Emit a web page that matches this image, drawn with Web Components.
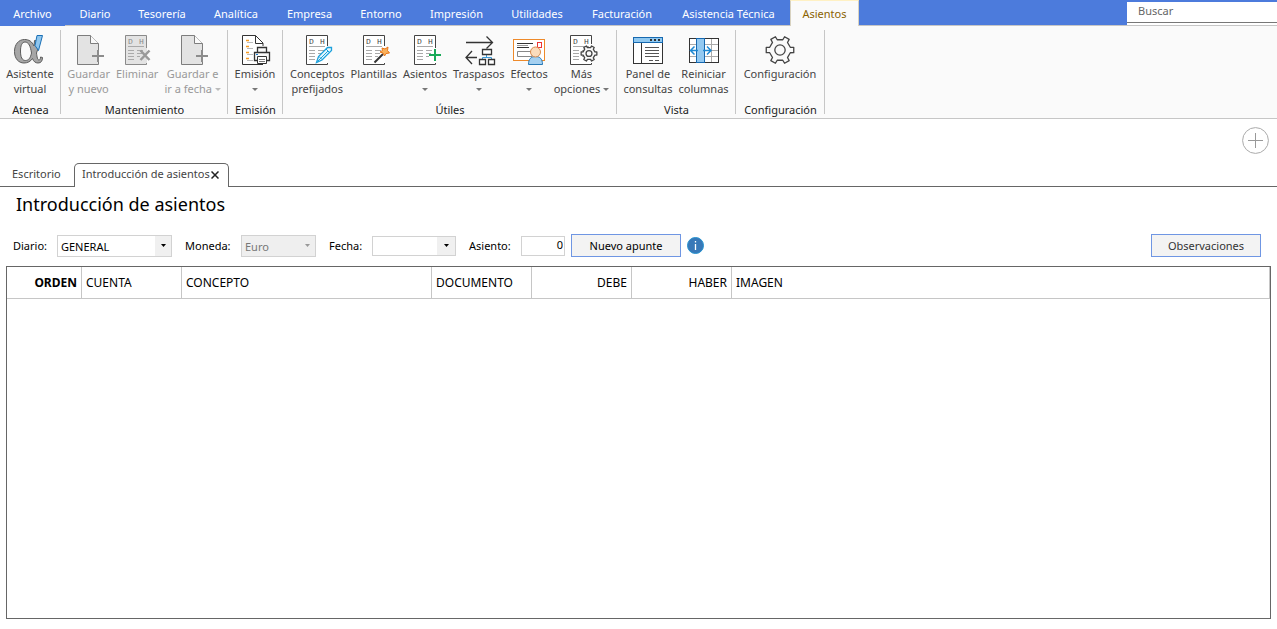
<!DOCTYPE html>
<html lang="es">
<head>
<meta charset="utf-8">
<title>Introducción de asientos</title>
<style>
html,body{margin:0;height:100%}
body{font:11px/15px "Noto Sans","Open Sans",sans-serif;color:#000;background:#fff}
</style>
</head>
<body>
<app-shell></app-shell>

<script>
const define = (name, html, setup) => {
  const tpl = document.createElement('template');
  tpl.innerHTML = html;
  customElements.define(name, class extends HTMLElement {
    constructor() {
      super();
      this.attachShadow({mode: 'open'}).append(tpl.content.cloneNode(true));
    }
    connectedCallback() { if (setup) setup(this, this.shadowRoot); }
  });
};

/* ---------- icons ---------- */
const page = x => `<path d="M${x+21}.5 26V30.5H${x}.5V1.5H${x+13}.5L${x+21}.5 9.5V20" fill="#e3e3e3" stroke="#7d7d7d"/><path d="M${x+13}.5 1.5V9.5H${x+21}.5" fill="#fafafa" stroke="#7d7d7d"/>`;
const ledger = (x, fill, ink, cut) => `
  <rect x="${x}" y="1" width="22" height="30" fill="${fill}"/>
  <path d="M${x+21}.5 ${cut}V1.5H${x}.5V30.5H${x+21}.5V29" fill="none" stroke="${ink}"/>
  <text x="${x+3}" y="10" font-size="8" font-family="Liberation Mono" fill="${ink}">D</text>
  <text x="${x+14}" y="10" font-size="8" font-family="Liberation Mono" fill="${ink}">H</text>
  <path d="M${x+3} 12.5H${x+19}M${x+3} 16.5H${x+9}M${x+3} 19.5H${x+9}M${x+3} 22.5H${x+9}M${x+3} 25.5H${x+9}M${x+12} 16.5H${x+18}M${x+12} 19.5H${x+17}M${x+12} 22.5H${x+15}" stroke="#a9a9a9" fill="none"/>`;
const gear = (cx, cy, r) => {
  let d = '';
  for (let i = 0; i < 6; i++) {
    [[-.19, 1], [.19, 1], [.26, .76], [.79, .76]].forEach(([a, k], j) => {
      const t = i * Math.PI / 3 + a;
      d += (i || j ? 'L' : 'M') + (cx + r * k * Math.cos(t)).toFixed(2) + ' ' + (cy + r * k * Math.sin(t)).toFixed(2);
    });
  }
  return `<path d="${d}Z" fill="#fafafa" stroke="#444" stroke-width="1.3" stroke-linejoin="round"/><circle cx="${cx}" cy="${cy}" r="${r * .37}" fill="none" stroke="#444" stroke-width="1.3"/>`;
};
const plus = (c, x, y) => `<path d="M${x} ${y-6}V${y+6}M${x-6} ${y}H${x+6}" stroke="${c}" stroke-width="2" fill="none"/>`;
const icons = {
  alpha: `<path d="M10.500 5.500C4.500 5.500 .5 10.500 .5 17.500C.5 24.500 4.500 29 10 29C13.500 29 16.500 27.500 18.500 24.500C19.500 27.500 21.500 29 24 29C27 29 28.500 27 28.500 23.500L26.500 23C26.500 25 26 26 25 26C23.500 26 23 23 22.500 19C24 15 25 11 25 7L20.500 6.500L20 12C18 7.500 15 5.500 10.500 5.500ZM11 8C14.500 8 16.500 12 17.500 19C16.500 24 14.500 26.500 11.500 26.500C8 26.500 6.500 23 6.500 17C6.500 11.500 8 8 11 8Z" fill="#a6a6a6" stroke="#5c5c5c" fill-rule="evenodd"/>
    <path d="M23 1.500H28.500L24.500 16.500L21 11.500Z" fill="#8fc6ee" stroke="#1a6fb5"/>`,
  add: page(4) + plus('#8c8c8c', 25, 22),
  remove: ledger(4, '#e3e3e3', '#8a8a8a', 14) + '<path d="M19.5 16.5L28.5 26M28.5 16.5L19.5 26" stroke="#999" stroke-width="2.5"/>',
  print: `<path d="M24 30.500H3.500V1.500H16.500L24 9V12" fill="#fff" stroke="#333"/><path d="M16.500 1.500V9.500H24" fill="none" stroke="#333"/>
    <path d="M7 6.500H10M7 12.500H10M7 18.500H10M7 24.500H10" stroke="#f59a23" stroke-width="1.500"/>
    <path d="M8 8.500H14M8 14.500H14M8 20.500H14M8 26.500H14" stroke="#bbb"/>
    <path d="M18.500 18V13.500H27.500V18M18.500 26.500H15.500V18.500H30.500V26.500H27.500" fill="#fafafa" stroke="#333" stroke-width="1.300"/>
    <path d="M18.500 22.500H27.500V29.500H18.500Z" fill="#fff" stroke="#333"/><path d="M20 25.500H26M20 27.500H26" stroke="#777"/><path d="M17 20.500H19" stroke="#1a7fd0"/>`,
  pen: ledger(5, '#fff', '#444', 12) + '<path d="M15.500 28.500L17.500 22.500L26.500 13.500H30.500V16.500L21 26Z" fill="#e8f7fd" stroke="#1da1dc" stroke-width="1.300"/><path d="M17 27L27 17M18 22.500L21 25.500M25 15L28.500 18.500" stroke="#1da1dc"/>',
  wand: ledger(5, '#fff', '#444', 12) + '<path d="M16.500 28.500L25 20" stroke="#333" stroke-width="2"/><path d="M24 14L27 15L30 13L29.500 16.500L31.500 19L28 19.500L26.500 22L25 19L22 18L24.500 16.500Z" fill="#f9b15b" stroke="#e9761a"/>',
  plus: ledger(5, '#fff', '#444', 14) + plus('#18a957', 26, 21),
  transfer: `<path d="M3 8.500H29M23.500 2.500L29.500 8.500L23.500 14.500M14 23.500H3.500M9 17L3 23.500L9 30" fill="none" stroke="#333" stroke-width="1.300"/>
    <path d="M23.500 21V23.500M19.500 26V23.500H28.500V26" fill="none" stroke="#3a9ad9"/>
    <path d="M19.500 15.500H28.500V20.500H19.500ZM16.500 25.500H22.500V30.500H16.500ZM25.500 25.500H31.500V30.500H25.500Z" fill="#fff" stroke="#333" stroke-width="1.300"/>`,
  bill: `<rect x=".5" y="5.500" width="31" height="21" fill="#fff" stroke="#ee8a2a"/>
    <path d="M4 9.500H20M4 13.500H16" stroke="#333"/><path d="M4 11.500H15" stroke="#999"/><path d="M4.500 17.500H19V22.500H4.500Z" fill="none" stroke="#888"/>
    <rect x="24.500" y="8.500" width="4" height="5" fill="#fff" stroke="#e33"/>
    <path d="M15.500 30.500C15.500 25 18 22.500 22.500 22.500S29.500 25 29.500 30.500Z" fill="#a5d0f0" stroke="#2778b5"/>
    <circle cx="22.500" cy="18" r="5" fill="#fbdcbc" stroke="#d98a4c"/>`,
  gearDoc: ledger(5, '#fff', '#444', 10) + gear(24, 19.5, 8),
  panel: `<rect x="1.500" y="3.500" width="29" height="26" fill="#fff" stroke="#333"/><path d="M9.500 9V29" stroke="#333"/>
    <rect x="1.500" y="3.500" width="29" height="5" fill="#8fc8f0" stroke="#1769b0"/>
    <path d="M18 6H20M22 6H24M26 6H28" stroke="#333" stroke-width="2"/>
    <path d="M13 13.500H27M13 16.500H27M13 19.500H27M13 22.500H27M17 26.500H21M23 26.500H27" stroke="#555"/>`,
  columns: `<rect x="1.500" y="4.500" width="29" height="24" fill="#fff" stroke="#333"/>
    <path d="M2 10.500H30M2 16.500H30M2 22.500H30M23.500 5V28" stroke="#aaa"/>
    <rect x="8.500" y="4.500" width="8" height="24" fill="#93c9f1" stroke="#1769b0"/>
    <path d="M2.500 16.500H10M6.500 12.500L2.500 16.500L6.500 20.500M15 16.500H23M19 12.500L23 16.500L19 20.500" fill="none" stroke="#1e88d2" stroke-width="1.500"/>`,
  gear: gear(16, 16, 14)
};

define('ribbon-button', `<style>
:host{display:block}
button{all:unset;box-sizing:border-box;display:grid;justify-items:center;padding:0 3px;color:#444;text-align:center;white-space:nowrap;cursor:default}
svg{width:32px;height:32px;overflow:visible}
:host([disabled]) button{color:#999}
::slotted(i){display:inline-block;border:3px solid transparent;border-top-color:#777;border-bottom:0;vertical-align:2px}
:host([disabled]) ::slotted(i){border-top-color:#bbb}
</style><button type="button"><svg viewBox="0 0 32 32" aria-hidden="true"></svg><span><slot></slot></span></button>`,
(el, root) => {
  root.querySelector('svg').innerHTML = icons[el.getAttribute('icon')];
  root.querySelector('button').disabled = el.hasAttribute('disabled');
});

define('ribbon-group', `<style>
:host{display:grid;grid-template-rows:1fr 12px;box-sizing:border-box;width:var(--w);height:84px;border-right:1px solid #c6c6c6;padding-top:4px}
div{display:flex;justify-content:center}
h2{margin:0;font:inherit;text-align:center;color:#222;padding-left:1px}
</style><div><slot></slot></div><h2></h2>`,
(el, root) => { root.querySelector('h2').textContent = el.getAttribute('label'); });

define('main-menu', `<style>
:host{display:flex;justify-content:space-between;background:#4c7bdc;height:25px;border-bottom:1px solid #c6c6c6}
nav{display:grid;grid-template-columns:65px 60px 74px 74px 73px 70px 81px 80px 90px 123px 69px}
a{box-sizing:border-box;height:25px;padding-top:6px;color:#fff;text-align:center;text-decoration:none;white-space:nowrap}
a:first-child{height:26px;background:#4c7bdc}
a[aria-current]{height:26px;padding-top:5px;color:#8a6200;background:#fafafa;border:1px solid #d8d2c0;border-bottom:0;border-top-color:#fff1c4}
label{display:block;box-sizing:border-box;width:150px;height:23px;margin-top:2px;background:#fff}
input{display:block;box-sizing:border-box;width:100%;height:21px;border:0;border-bottom:1px solid #777;padding:0 11px 4px;font:inherit;color:#666;outline:0;background:#fff}
input::placeholder{color:#666;opacity:1}
</style>
<nav><a href="#">Archivo</a><a href="#">Diario</a><a href="#">Tesorería</a><a href="#">Analítica</a><a href="#">Empresa</a><a href="#">Entorno</a><a href="#">Impresión</a><a href="#">Utilidades</a><a href="#">Facturación</a><a href="#">Asistencia Técnica</a><a href="#" aria-current="page">Asientos</a></nav>
<label><input type="search" placeholder="Buscar" aria-label="Buscar"></label>`);

define('main-ribbon', `<style>
:host{display:flex;background:#fafafa;border-bottom:1px solid #c6c6c6;padding:4px 0}
</style>
<ribbon-group label="Atenea" style="--w:61px"><ribbon-button icon="alpha">Asistente<br>virtual</ribbon-button></ribbon-group>
<ribbon-group label="Mantenimiento" style="--w:167px"><ribbon-button icon="add" disabled>Guardar<br>y nuevo</ribbon-button><ribbon-button icon="remove" disabled>Eliminar</ribbon-button><ribbon-button icon="add" disabled>Guardar e<br>ir a fecha <i></i></ribbon-button></ribbon-group>
<ribbon-group label="Emisión" style="--w:55px"><ribbon-button icon="print">Emisión<br><i></i></ribbon-button></ribbon-group>
<ribbon-group label="Útiles" style="--w:334px"><ribbon-button icon="pen">Conceptos<br>prefijados</ribbon-button><ribbon-button icon="wand">Plantillas</ribbon-button><ribbon-button icon="plus">Asientos<br><i></i></ribbon-button><ribbon-button icon="transfer">Traspasos<br><i></i></ribbon-button><ribbon-button icon="bill">Efectos<br><i></i></ribbon-button><ribbon-button icon="gearDoc">Más<br>opciones <i></i></ribbon-button></ribbon-group>
<ribbon-group label="Vista" style="--w:119px"><ribbon-button icon="panel">Panel de<br>consultas</ribbon-button><ribbon-button icon="columns">Reiniciar<br>columnas</ribbon-button></ribbon-group>
<ribbon-group label="Configuración" style="--w:89px"><ribbon-button icon="gear">Configuración</ribbon-button></ribbon-group>`);

define('document-tabs', `<style>
:host{display:block}
.bar{display:flex;align-items:flex-start;justify-content:flex-end;padding:8px 8px 0;height:36px}
button{all:unset;cursor:default;display:block}
.bar svg{display:block;width:27px;height:27px}
nav{display:flex;box-sizing:border-box;height:24px;border-bottom:1px solid #666}
a{color:#444;text-decoration:none;padding:3px 0 0 12px;width:62px}
.active{box-sizing:border-box;display:flex;align-items:flex-start;justify-content:space-between;height:24px;width:155px;padding:2px 9px 0 7px;white-space:nowrap;background:#fff;border:1px solid #666;border-bottom:0;border-radius:5px 5px 0 0}
.active a{padding:0;width:auto}
.active svg{display:block;width:8px;height:8px;margin-top:5px}
</style>
<div class="bar"><button type="button" aria-label="Añadir"><svg viewBox="0 0 27 27"><circle cx="13.500" cy="13.500" r="12.900" fill="none" stroke="#aaa"/><path d="M13.500 6V21M6 13.500H21" stroke="#999"/></svg></button></div>
<nav><a href="#">Escritorio</a><div class="active"><a href="#" aria-current="page">Introducción de asientos</a><button type="button" aria-label="Cerrar"><svg viewBox="0 0 8 8"><path d="M.5.5L7.500 7.500M7.500.5L.5 7.500" stroke="#222" stroke-width="1.500"/></svg></button></div></nav>`);

define('combo-box', `<style>
:host{display:flex;align-items:center}
label{width:var(--label)}
div{display:grid;box-sizing:border-box;width:var(--field);height:var(--h,22px);border:1px solid #d2d2d2;background:#fff}
select,svg{grid-area:1/1}
select{appearance:none;border:0;padding:1px 3px 0;margin:0;font:inherit;color:#000;background:linear-gradient(#f0f0f0,#f0f0f0) right/var(--btn,16px) 100% no-repeat;outline:0;min-width:0;opacity:1}
svg{width:5px;height:3px;justify-self:end;align-self:center;margin-right:var(--arrow,5px);pointer-events:none}
:host([disabled]) div,:host([disabled]) select{background:#efefef;color:#777}
:host([disabled]) svg{fill:#999}
</style><label for="f"></label><div><select id="f"><option></option></select><svg viewBox="0 0 5 3"><path d="M0 0H5L2.500 3Z"/></svg></div>`,
(el, root) => {
  root.querySelector('label').textContent = el.getAttribute('label');
  root.querySelector('option').textContent = el.getAttribute('value') || '';
  root.querySelector('select').disabled = el.hasAttribute('disabled');
});

define('entry-form', `<style>
:host{display:block}
h1{margin:0;padding:4px 16px 0;font-size:18px;font-weight:400;line-height:26px}
form{display:flex;align-items:center;padding:17px 16px 0 13px;height:23px}
combo-box{margin-right:13px}
label{width:52px}
input{box-sizing:border-box;width:44px;height:20px;border:1px solid #d2d2d2;padding:0 1px 2px;text-align:right;font:inherit;outline:0;margin-right:6px}
button{box-sizing:border-box;width:110px;height:23px;padding:0;border:1px solid #6f96e3;background:#f3f3f3;font:inherit;color:#000}
.last{margin-left:auto;color:#333}
.info{width:17px;height:17px;margin-left:6px}
</style>
<h1>Introducción de asientos</h1>
<form><combo-box label="Diario:" value="GENERAL" style="--label:44px;--field:115px"></combo-box><combo-box label="Moneda:" value="Euro" disabled style="--label:56px;--field:75px"></combo-box><combo-box label="Fecha:" style="--label:43px;--field:84px;--h:20px;--btn:18px;--arrow:6px"></combo-box><label for="n">Asiento:</label><input id="n" type="text" value="0"><button type="button">Nuevo apunte</button>
<svg class="info" viewBox="0 0 17 17" role="img" aria-label="Información"><circle cx="8.500" cy="8.500" r="8" fill="#3878b8" stroke="#2592cf"/><path d="M8.500 7V13M8.500 4V5.500" stroke="#fff" stroke-width="1.300"/></svg>
<button class="last" type="button">Observaciones</button></form>`);

define('entry-table', `<style>
:host{display:block;box-sizing:border-box;border:1px solid #666}
table{border-collapse:separate;border-spacing:0;table-layout:fixed;width:100%;font-size:12px}
th{box-sizing:border-box;height:32px;padding:0 4px;border-right:1px solid #c6c6c6;border-bottom:1px solid #c6c6c6;font-weight:400;text-align:left}
.n{text-align:right}
.sorted{font-weight:700}
.s{width:75px}.m{width:100px}.l{width:250px}
</style>
<table><thead><tr><th class="n s sorted">ORDEN</th><th class="m">CUENTA</th><th class="l">CONCEPTO</th><th class="m">DOCUMENTO</th><th class="n m">DEBE</th><th class="n m">HABER</th><th>IMAGEN</th></tr></thead><tbody></tbody></table>`);

define('app-shell', `<style>
:host{display:flex;flex-direction:column;min-height:100vh}
entry-table{flex:1;margin:9px 6px 10px}
</style>
<main-menu></main-menu><main-ribbon></main-ribbon><document-tabs></document-tabs><entry-form></entry-form><entry-table></entry-table>`);
</script>
</body>
</html>
